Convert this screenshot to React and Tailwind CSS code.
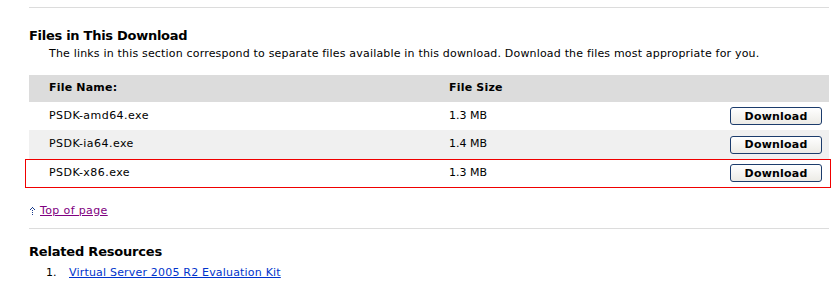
const files = [
  { name: "PSDK-amd64.exe", size: "1.3 MB" },
  { name: "PSDK-ia64.exe", size: "1.4 MB" },
  { name: "PSDK-x86.exe", size: "1.3 MB", marked: true },
];

function DownloadButton() {
  return (
    <button className="w-[92px] h-[18px] rounded-[3px] border border-solid border-[#1c3c6c] bg-gradient-to-b from-white to-[#ecebe6] text-[11px] font-bold leading-none text-black tracking-[0.2px]">
      Download
    </button>
  );
}

function UpArrow() {
  return (
    <svg width="8" height="9" viewBox="0 0 8 9" className="shrink-0" shapeRendering="crispEdges">
      <rect x="3" y="0" width="1" height="1" fill="#1c3c8c" />
      <rect x="2" y="1" width="1" height="1" fill="#1c3c8c" />
      <rect x="4" y="1" width="1" height="1" fill="#1c3c8c" />
      <rect x="1" y="2" width="1" height="1" fill="#1c3c8c" />
      <rect x="5" y="2" width="1" height="1" fill="#1c3c8c" />
      <rect x="3" y="3" width="1" height="1" fill="#1c3c8c" />
      <rect x="3" y="5" width="1" height="1" fill="#1c3c8c" />
      <rect x="3" y="7" width="1" height="1" fill="#1c3c8c" />
    </svg>
  );
}

export default function App() {
  return (
    <div className="w-[836px] h-[295px] bg-white overflow-hidden pl-[29px] pr-[7px] pt-[7px] text-black font-[DejaVu_Sans,Verdana,sans-serif]">
      <div className="h-px bg-[#dcdcdc]" />

      <h2 className="mt-[20px] text-[13px] font-bold leading-[16px] tracking-[-0.28px]">Files in This Download</h2>
      <p className="mt-[3px] pl-[20px] text-[11px] leading-[14px] tracking-[0.18px]">
        The links in this section correspond to separate files available in this download. Download the files most appropriate for you.
      </p>

      <div className="mt-[14px] text-[11px]">
        <div className="flex items-center h-[27px] bg-[#dcdcdc] font-bold tracking-[0.2px]">
          <div className="w-[420px] pl-[20px]">File Name:</div>
          <div>File Size</div>
        </div>
        {files.map((f, i) => (
          <div
            key={f.name}
            className={`relative flex items-center ${i === 1 ? "h-[29px] bg-[#f0f0f0]" : "h-[28px] bg-white"}`}
          >
            <div className="w-[420px] pl-[20px] tracking-[0.45px]">{f.name}</div>
            <div className="flex-1">{f.size}</div>
            <div className="pr-[7px] flex items-center">
              <DownloadButton />
            </div>
            {f.marked && (
              <div className="absolute -left-[4px] -right-[2px] top-0 -bottom-px border border-solid border-[color:#f00000] pointer-events-none" />
            )}
          </div>
        ))}
      </div>

      <div className="mt-[17px] flex items-center text-[11px] leading-[14px]">
        <span className="w-[11px] flex items-center">
          <UpArrow />
        </span>
        <a href="#" className="text-[#800080] underline tracking-[0.37px]">Top of page</a>
      </div>

      <div className="mt-[10px] h-px bg-[#dcdcdc]" />

      <h2 className="mt-[15px] text-[13px] font-bold leading-[16px] tracking-[-0.2px]">Related Resources</h2>
      <ol className="mt-[6px] text-[11px] leading-[14px]">
        <li className="flex">
          <span className="w-[40px] pl-[17px]">1.</span>
          <a href="#" className="text-[#0033cc] underline tracking-[0.19px]">Virtual Server 2005 R2 Evaluation Kit</a>
        </li>
      </ol>
    </div>
  );
}
